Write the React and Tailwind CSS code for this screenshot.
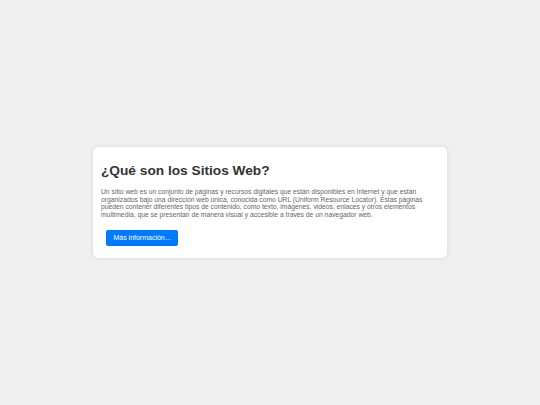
export default function App() {
  return (
    <div
      className="min-h-screen w-full bg-[#f0f0f0] flex items-center justify-center"
      style={{ fontFamily: '"Liberation Sans", Arial, sans-serif' }}
    >
      <div className="w-[354px] h-[111px] bg-white rounded-[5px] shadow-[0_0_4px_rgba(0,0,0,0.12)] px-2 pt-[15px]">
        <h1 className="text-[13.7px] leading-[18px] font-bold text-[#333]">¿Qué son los Sitios Web?</h1>
        <p className="mt-[8px] text-[6.75px] leading-[7.7px] text-[#666]">
          Un sitio web es un conjunto de páginas y recursos digitales que están disponibles en Internet y que están
          organizados bajo una dirección web única, conocida como URL (Uniform Resource Locator). Estas páginas
          pueden contener diferentes tipos de contenido, como texto, imágenes, videos, enlaces y otros elementos
          multimedia, que se presentan de manera visual y accesible a través de un navegador web.
        </p>
        <button className="mt-[11px] ml-[5px] w-[72px] h-[16px] bg-[#007bff] text-white text-[7px] rounded-[2px] flex items-center justify-center">
          Más información...
        </button>
      </div>
    </div>
  )
}
